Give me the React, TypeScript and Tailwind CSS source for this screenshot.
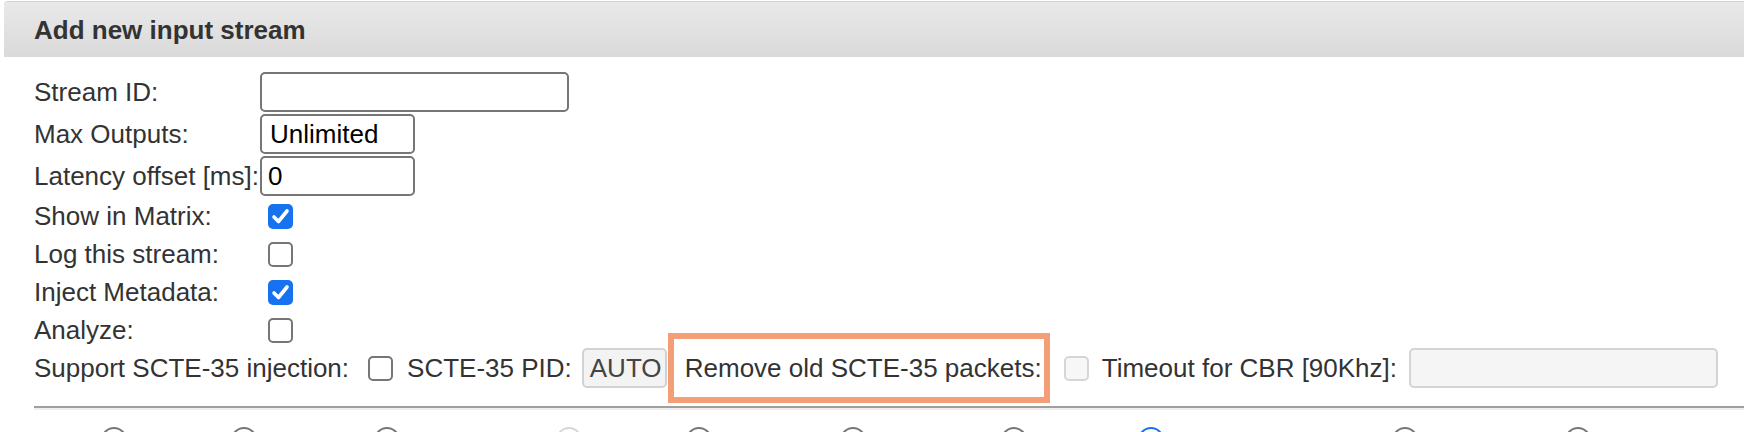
import React from "react";

const font = { fontFamily: '"Liberation Sans", Arial, Helvetica, sans-serif' };

function Checkbox({ checked = false, disabled = false }: { checked?: boolean; disabled?: boolean }) {
  if (checked) {
    return (
      <span className="flex h-[25px] w-[25px] shrink-0 items-center justify-center rounded-[5px] bg-[#1672ee]">
        <svg width="25" height="25" viewBox="0 0 25 25" fill="none">
          <path d="M6 13 L10.5 17.5 L19 7" stroke="white" strokeWidth="3.6" strokeLinecap="round" strokeLinejoin="round" />
        </svg>
      </span>
    );
  }
  return (
    <span
      className={
        disabled
          ? "block h-[25px] w-[25px] shrink-0 rounded-[5px] border-2 border-[#d6d6d6] bg-[#f7f7f7]"
          : "block h-[25px] w-[25px] shrink-0 rounded-[5px] border-2 border-[#767676] bg-white"
      }
    />
  );
}

function CheckRow({ label, checked }: { label: string; checked?: boolean }) {
  return (
    <div className="flex h-[38px] items-center">
      <span className="w-[226px] shrink-0">{label}</span>
      <span className="ml-[8px]">
        <Checkbox checked={checked} />
      </span>
    </div>
  );
}

// radio tops peeking in at the bottom edge
const radios = [
  { cls: "ml-[67px]", kind: "normal" },
  { cls: "ml-[104px]", kind: "normal" },
  { cls: "ml-[117px]", kind: "normal" },
  { cls: "ml-[156px]", kind: "disabled" },
  { cls: "ml-[104px]", kind: "normal" },
  { cls: "ml-[128px]", kind: "normal" },
  { cls: "ml-[135px]", kind: "normal" },
  { cls: "ml-[111px]", kind: "checked" },
  { cls: "ml-[228px]", kind: "normal" },
  { cls: "ml-[147px]", kind: "normal" },
];

export default function App() {
  return (
    <div className="min-h-[432px] overflow-hidden bg-white text-[26px] leading-[30px] text-[#333]" style={font}>
      {/* Header */}
      <div className="ml-[4px] mt-[1px] flex h-[56px] items-center rounded-tl-[4px] border-t border-[#d4d4d4] bg-gradient-to-b from-[#e9e9e9] to-[#dadada] pl-[30px]">
        <h2 className="text-[26px] font-bold text-[#333]">Add new input stream</h2>
      </div>

      <div className="pl-[34px] pt-[15px]">
        {/* Text fields */}
        <div className="flex h-[40px] items-center">
          <span className="w-[226px] shrink-0">Stream ID:</span>
          <input
            readOnly
            value=""
            className="h-[40px] w-[309px] rounded-[5px] border-2 border-[#767676] bg-white px-[8px] text-black outline-none"
          />
        </div>
        <div className="mt-[2px] flex h-[40px] items-center">
          <span className="w-[226px] shrink-0">Max Outputs:</span>
          <input
            readOnly
            value="Unlimited"
            className="h-[40px] w-[155px] rounded-[5px] border-2 border-[#767676] bg-white px-[8px] text-black outline-none"
          />
        </div>
        <div className="mt-[2px] flex h-[40px] items-center">
          <span className="w-[226px] shrink-0 whitespace-nowrap">Latency offset [ms]:</span>
          <input
            readOnly
            value="0"
            className="h-[40px] w-[155px] rounded-[5px] border-2 border-[#767676] bg-white px-[6px] text-black outline-none"
          />
        </div>

        {/* Checkboxes */}
        <div className="mt-[1px]">
          <CheckRow label="Show in Matrix:" checked />
          <CheckRow label="Log this stream:" />
          <CheckRow label="Inject Metadata:" checked />
          <CheckRow label="Analyze:" />
        </div>

        {/* SCTE-35 row */}
        <div className="flex h-[38px] items-center whitespace-nowrap">
          <span>Support SCTE-35 injection:</span>
          <span className="ml-[19px]">
            <Checkbox />
          </span>
          <span className="ml-[14px]">SCTE-35 PID:</span>
          <span className="ml-[10px] flex h-[40px] w-[85px] items-center rounded-[5px] border-2 border-[#d2d2d2] bg-[#f3f3f3] pl-[6px] text-[#444]">
            AUTO
          </span>
          <span className="-my-[16px] ml-[1px] flex h-[70px] w-[382px] items-center border-[6px] border-[#f49e78] bg-white pl-[11px]">
            Remove old SCTE-35 packets:
          </span>
          <span className="ml-[14px]">
            <Checkbox disabled />
          </span>
          <span className="ml-[13px]">Timeout for CBR [90Khz]:</span>
          <input
            readOnly
            disabled
            value=""
            className="ml-[12px] h-[40px] w-[309px] rounded-[5px] border-2 border-[#d4d4d4] bg-[#f5f5f5] outline-none"
          />
        </div>

        {/* Divider */}
        <div className="mt-[19px] border-t-2 border-b-2 border-t-[#9f9f9f] border-b-[#eeeeee]" />

        {/* Radio row (cut off by the window) */}
        <div className="mt-[17px] flex">
          {radios.map((r, i) => (
            <span
              key={i}
              className={
                r.cls +
                " block h-[26px] w-[26px] shrink-0 rounded-full border-2 " +
                (r.kind === "checked"
                  ? "border-[#1672ee] bg-white"
                  : r.kind === "disabled"
                  ? "border-[#d6d6d6] bg-white"
                  : "border-[#767676] bg-white")
              }
            />
          ))}
        </div>
      </div>
    </div>
  );
}
